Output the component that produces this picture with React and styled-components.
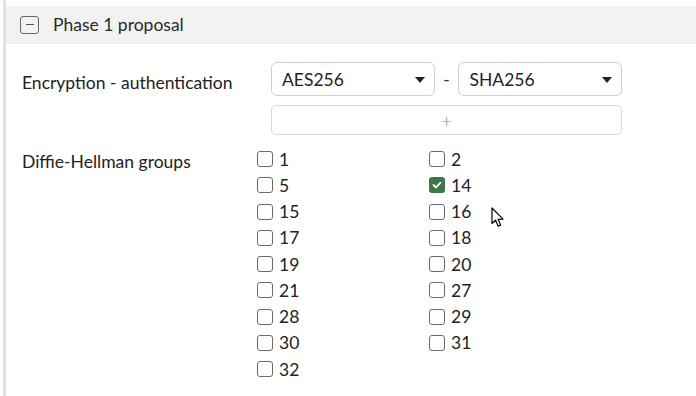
import React from "react";
import styled, { createGlobalStyle } from "styled-components";

const GlobalStyle = createGlobalStyle`
    html, body {
        margin: 0;
        background: #fff;
    }
    body {
        font-family: Lato, "Open Sans", sans-serif;
        color: #222;
    }
`;

const Page = styled.div`
    position: relative;
    width: 696px;
    height: 396px;
    padding-left: 3px;
    box-sizing: border-box;
    overflow: hidden;
`;

const Panel = styled.section`
    height: 100%;
    border-left: 3px solid #e2e2e2;
    padding-top: 6px;
    box-sizing: border-box;
`;

const Header = styled.header`
    height: 37px;
    display: flex;
    align-items: center;
    gap: 14px;
    padding-left: 14px;
    background: #f2f2f2;
    border-bottom: 1px solid #ececec;
    font-size: 17.5px;
    color: #2a2a2a;
`;

const ToggleBox = styled.span`
    width: 19px;
    height: 18px;
    box-sizing: border-box;
    border: 1.5px solid #666;
    border-radius: 3px;
    display: flex;
    align-items: center;
    justify-content: center;
    &::before {
        content: "";
        width: 8px;
        height: 1.5px;
        background: #555;
    }
`;

const Body = styled.div`
    padding: 18px 0 0 16px;
    display: grid;
    grid-template-columns: 249px 1fr;
    row-gap: 16px;
`;

const Label = styled.div`
    font-size: 17.5px;
    color: #222;
    padding-top: ${({ $top }) => $top}px;
`;

const Controls = styled.div`
    display: flex;
    flex-direction: column;
    gap: 9px;
    width: ${({ $width }) => $width}px;
`;

const SelectRow = styled.div`
    display: flex;
    align-items: center;
`;

const Select = styled.div`
    width: 164px;
    height: 34px;
    box-sizing: border-box;
    border: 1px solid #cfcfcf;
    border-radius: 6px;
    display: flex;
    align-items: center;
    justify-content: space-between;
    padding: 0 9px 0 10px;
    font-size: 17.5px;
    color: #222;
`;

const Caret = styled.span`
    width: 0;
    height: 0;
    border-left: 5px solid transparent;
    border-right: 5px solid transparent;
    border-top: 6px solid #222;
    margin-top: 2px;
`;

const Dash = styled.span`
    width: 24px;
    text-align: center;
    font-size: 17.5px;
    color: #333;
`;

const AddButton = styled.button`
    width: 351px;
    height: 30px;
    box-sizing: border-box;
    border: 1px solid #d8d8d8;
    border-radius: 5px;
    background: #fff;
    color: #888;
    font-family: inherit;
    font-size: 20px;
    font-weight: 300;
    display: flex;
    align-items: center;
    justify-content: center;
    padding: 0;
`;

const CheckGrid = styled.div`
    display: grid;
    grid-template-columns: 172px 172px;
    grid-auto-rows: 26.25px;
    margin-top: -5px;
    margin-left: -14px;
`;

const CheckItem = styled.label`
    display: flex;
    align-items: center;
    gap: 6px;
    font-size: 17.5px;
    color: #222;
`;

const Box = styled.span`
    width: 16px;
    height: 16px;
    box-sizing: border-box;
    border-radius: 3px;
    border: ${({ $checked }) => ($checked ? "none" : "1.3px solid #6b6b6b")};
    background: ${({ $checked }) => ($checked ? "#3b7a46" : "#fff")};
    display: flex;
    align-items: center;
    justify-content: center;
`;

const Cursor = styled.svg`
    position: absolute;
    left: 491px;
    top: 207px;
`;

const groups = [
    ["1", false], ["2", false],
    ["5", false], ["14", true],
    ["15", false], ["16", false],
    ["17", false], ["18", false],
    ["19", false], ["20", false],
    ["21", false], ["27", false],
    ["28", false], ["29", false],
    ["30", false], ["31", false],
    ["32", false],
];

const Check = ({ label, checked }) => (
    <CheckItem>
        <Box $checked={checked}>
            {checked && (
                <svg width="10" height="8" viewBox="0 0 10 8">
                    <path d="M1.5 4 L4 6.3 L8.5 1.7" fill="none" stroke="#fff" strokeWidth="1.8" strokeLinecap="round" strokeLinejoin="round" />
                </svg>
            )}
        </Box>
        {label}
    </CheckItem>
);

export default function App() {
    return (
        <>
            <GlobalStyle />
            <Page>
                <Panel>
                    <Header>
                        <ToggleBox />
                        Phase 1 proposal
                    </Header>
                    <Body>
                        <Label $top={10}>Encryption - authentication</Label>
                        <Controls $width={351}>
                            <SelectRow>
                                <Select>AES256<Caret /></Select>
                                <Dash>-</Dash>
                                <Select>SHA256<Caret /></Select>
                            </SelectRow>
                            <AddButton>+</AddButton>
                        </Controls>
                        <Label $top={0}>Diffie-Hellman groups</Label>
                        <CheckGrid>
                            {groups.map(([g, c]) => (
                                <Check key={g} label={g} checked={c} />
                            ))}
                        </CheckGrid>
                    </Body>
                </Panel>
                <Cursor width="14" height="22" viewBox="0 0 14 22">
                    <path d="M1 1 L1 16.5 L4.6 13.2 L7.2 19.2 L9.6 18.1 L7.1 12.3 L12 12.1 Z" fill="#fff" stroke="#000" strokeWidth="1.2" strokeLinejoin="round" />
                </Cursor>
            </Page>
        </>
    );
}
